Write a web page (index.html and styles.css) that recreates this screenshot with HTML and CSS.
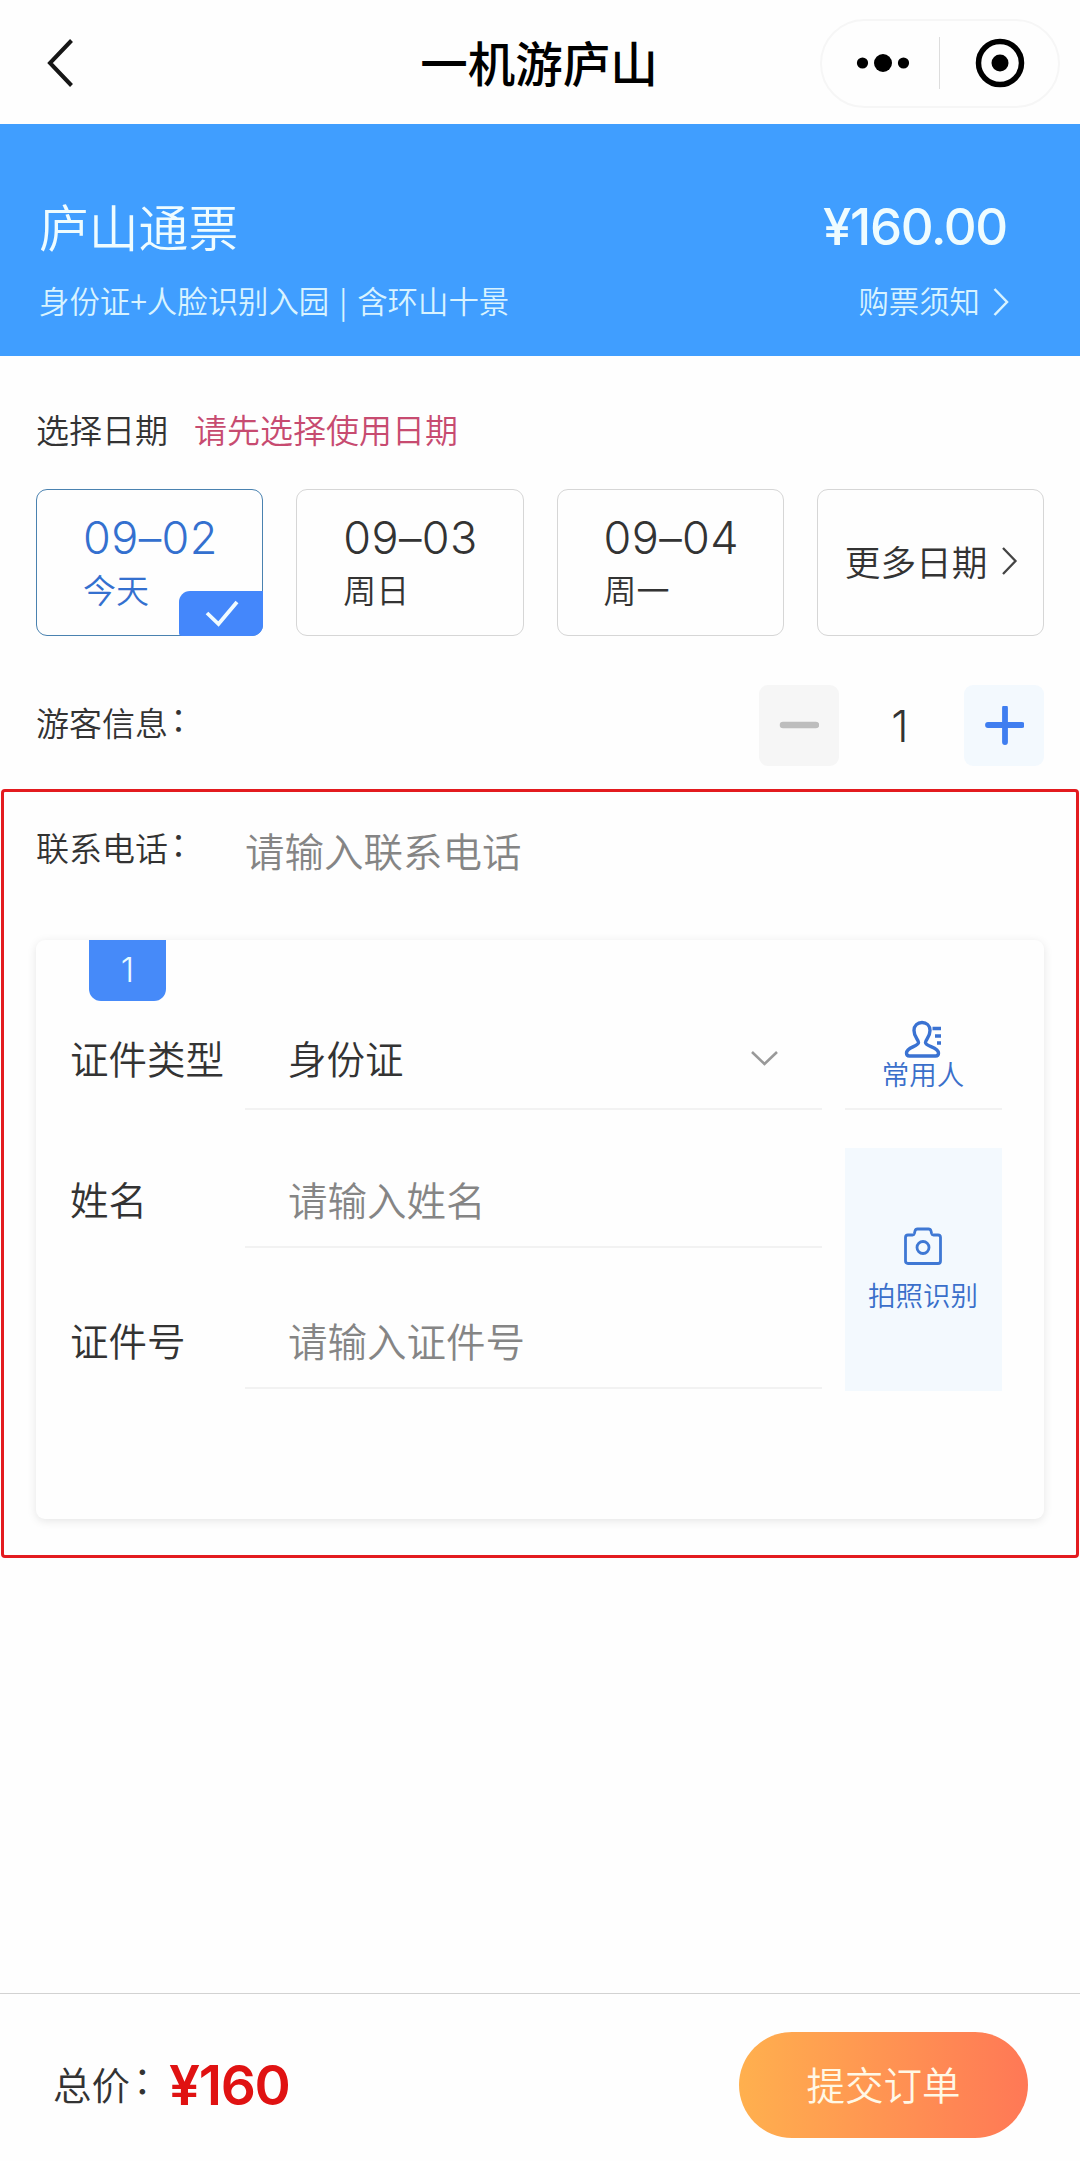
FILE: index.html
```html
<!DOCTYPE html>
<html lang="zh-CN">
<head>
<meta charset="UTF-8">
<title>一机游庐山</title>
<link rel="stylesheet" href="styles.css">
</head>
<body>
<div class="page">
  <header class="navbar">
    <svg class="back" width="28" height="50" viewBox="0 0 28 50"><path d="M25.500 2.500L4 25L25.500 47.500" fill="none" stroke="#161616" stroke-width="4"/></svg>
    <h1 class="nav-title">一机游庐山</h1>
    <div class="capsule">
      <svg class="more" width="56" height="24" viewBox="0 0 56 24"><circle cx="7.500" cy="12" r="5.600"/><circle cx="28" cy="12" r="9"/><circle cx="48.500" cy="12" r="5.600"/></svg>
      <span class="capsule-line"></span>
      <svg class="target" width="50" height="50" viewBox="0 0 50 50"><circle cx="25" cy="25" r="21.500" fill="none" stroke="#000" stroke-width="5.500"/><circle cx="25" cy="25" r="8.500"/></svg>
    </div>
  </header>

  <section class="banner">
    <div class="banner-row">
      <h2 class="ticket-name">庐山通票</h2>
      <span class="ticket-price">¥160.00</span>
    </div>
    <div class="banner-row banner-sub">
      <span class="desc">身份证+人脸识别入园 | 含环山十景</span>
      <span class="notice">购票须知<svg width="18" height="34" viewBox="0 0 18 34"><path d="M2.500 6L15 19L2.500 32" fill="none" stroke="#d8f3ff" stroke-width="2.500"/></svg></span>
    </div>
  </section>

  <section class="dates">
    <div class="date-head"><span>选择日期</span><span class="tip">请先选择使用日期</span></div>
    <div class="date-list">
      <div class="date active">
        <span class="day">09–02</span><span class="week">今天</span>
        <span class="tick"><svg width="36" height="28" viewBox="0 0 36 28"><path d="M4 13L15.500 24L34 2" fill="none" stroke="#f1fbff" stroke-width="3.800"/></svg></span>
      </div>
      <div class="date"><span class="day">09–03</span><span class="week">周日</span></div>
      <div class="date"><span class="day">09–04</span><span class="week">周一</span></div>
      <div class="date more-dates">更多日期<svg width="18" height="30" viewBox="0 0 18 30"><path d="M2 2L14.500 15L2 28" fill="none" stroke="#444" stroke-width="2.300"/></svg></div>
    </div>
  </section>

  <section class="visitors">
    <span class="visitors-label">游客信息<span class="colon">：</span></span>
    <div class="stepper">
      <span class="step minus"><svg width="40" height="40" viewBox="0 0 40 40"><path d="M4 19H37" stroke="#bdbdbd" stroke-width="6.500" stroke-linecap="round"/></svg></span>
      <span class="count">1</span>
      <span class="step plus"><svg width="40" height="40" viewBox="0 0 40 40"><path d="M4 19H38M21 2V36" stroke="#3f7ef0" stroke-width="5.800" stroke-linecap="round"/></svg></span>
    </div>
  </section>

  <section class="form">
    <div class="phone"><span class="phone-label">联系电话<span class="colon">：</span></span><span class="placeholder">请输入联系电话</span></div>
    <div class="card">
      <span class="index">1</span>
      <div class="card-body">
        <div class="fields">
          <div class="field"><span class="label">证件类型</span><div class="value">身份证<svg width="30" height="18" viewBox="0 0 30 18"><path d="M3 3L15.500 15L28 3" fill="none" stroke="#999" stroke-width="2.600"/></svg></div></div>
          <div class="field"><span class="label">姓名</span><div class="value placeholder">请输入姓名</div></div>
          <div class="field"><span class="label">证件号</span><div class="value placeholder">请输入证件号</div></div>
        </div>
        <div class="actions">
          <div class="frequent">
            <svg width="38" height="38" viewBox="0 0 38 38" fill="none" stroke="#3a72d2" stroke-width="3.400"><path d="M14.500 22.500C14.500 19.500 10 17.500 10 10.500C10 5.500 13.500 2.500 18 2.500C22.500 2.500 26 5.500 26 10.500C26 17.500 21.500 19.500 21.500 22.500C21.500 26.500 34.500 27 34.500 33C34.500 35 33.500 36 31.500 36H5.500C3.500 36 2.500 35 2.500 33C2.500 27 14.500 26.500 14.500 22.500Z"/><path d="M28.500 8.500H37M31 16H37M33 23H37"/></svg>
            <span>常用人</span>
          </div>
          <div class="photo">
            <svg width="38" height="38" viewBox="0 0 38 38" fill="none" stroke="#3f78d4" stroke-width="2.800"><path d="M4 8H8.500Q10 8 10.400 6.500L11 4Q11.500 2 13.500 2H24.500Q26.500 2 27 4L27.600 6.500Q28 8 29.500 8H34Q36.500 8 36.500 10.500V34Q36.500 36.500 34 36.500H4Q1.500 36.500 1.500 34V10.500Q1.500 8 4 8Z"/><circle cx="19" cy="20.500" r="6"/></svg>
            <span>拍照识别</span>
          </div>
        </div>
      </div>
    </div>
  </section>

  <footer class="footer">
    <div class="total"><span class="total-label">总价<span class="colon">：</span></span><span class="total-price">¥160</span></div>
    <div class="submit">提交订单</div>
  </footer>
</div>
</body>
</html>
```
FILE: styles.css
```css
* { box-sizing: border-box; }
body {
  margin: 0;
  background: #fefefe;
  color: #333;
  font-family: "Noto Sans CJK SC", sans-serif;
  font-weight: 350;
}
h1, h2 { margin: 0; }
svg { display: block; flex: none; }
.colon { margin-left: .07em; line-height: 1; vertical-align: .15em; }
.page { width: 1080px; height: 2161px; display: flex; flex-direction: column; overflow: hidden; }

.navbar {
  height: 124px;
  flex: none;
  display: grid;
  grid-template-columns: 240px 1fr 240px;
  align-items: center;
  padding: 2px 20px 0 46px;
}
.nav-title {
  text-align: center;
  padding: 0 28px 3px 0;
  font-size: 47.500px;
  line-height: 60px;
  font-weight: 500;
  color: #000;
}
.capsule {
  height: 89px;
  border: 2px solid #f6f6f6;
  border-radius: 45px;
  display: flex;
  align-items: center;
  padding: 0 32px 0 33px;
}
.capsule-line { width: 1px; height: 52px; margin: 0 35px 0 28px; background: #ddd; }

.banner {
  height: 232px;
  flex: none;
  padding: 68px 70px 0 39px;
  background: #409eff;
  color: #effcff;
}
.banner-row { display: flex; justify-content: space-between; align-items: center; height: 66px; }
.ticket-name { font-size: 49.800px; line-height: 66px; font-weight: 350; }
.ticket-price { font-family: Inter, sans-serif; font-size: 51px; font-weight: 550; letter-spacing: -1.300px; padding: 2px 3px 0 0; }
.banner-sub { height: 44px; margin-top: 20px; font-size: 30.400px; line-height: 44px; color: #d8f3ff; }
.desc { word-spacing: 3.200px; }
.notice { display: flex; align-items: center; gap: 12px; }

.dates { height: 280px; flex: none; padding: 49px 36px 0; }
.date-head { display: flex; gap: 26px; font-size: 33px; line-height: 48px; }
.tip { color: #c74b70; }
.date-list { display: grid; grid-template-columns: repeat(4, 1fr); gap: 33px; margin-top: 36px; }
.date {
  position: relative;
  height: 147px;
  border: 1px solid #d6d6d6;
  border-radius: 11px;
  padding: 23px 0 0 46px;
  display: flex;
  flex-direction: column;
}
.date.active { border-color: #4a82b0; color: #3470cf; }
.day { font-family: Inter, sans-serif; font-size: 45px; line-height: 50px; font-weight: 350; letter-spacing: .400px; }
.week { font-size: 33px; line-height: 48px; margin-top: 2px; }
.tick {
  position: absolute;
  right: -1px;
  bottom: -1px;
  width: 84px;
  height: 45px;
  border-radius: 11px 0 11px 3px;
  background: #4487fb;
  display: flex;
  align-items: center;
  justify-content: center;
}
.more-dates { flex-direction: row; align-items: center; gap: 13px; padding: 0 0 4px 27px; font-size: 35.700px; }

.visitors { height: 152px; flex: none; display: flex; justify-content: space-between; align-items: flex-start; padding: 49px 36px 0; }
.visitors-label { font-size: 33px; line-height: 74px; }
.stepper { display: flex; align-items: center; }
.step { width: 80px; height: 81px; border-radius: 9px; display: flex; align-items: center; justify-content: center; }
.minus { background: #f6f6f6; }
.plus { background: #f3f9fe; }
.count { width: 125px; padding-right: 3px; text-align: center; font-family: Inter, sans-serif; font-size: 44px; font-weight: 350; }

.form { width: 1078px; height: 769px; flex: none; margin: 1px 0 0 1px; border: 3px solid #e31b1f; border-radius: 4px; padding: 27px 32px 0; }
.phone { display: flex; align-items: center; height: 60px; }
.phone-label { width: 209px; font-size: 33px; line-height: 48px; padding-bottom: 5px; }
.placeholder { color: #858585; font-size: 39.500px; }
.card { width: 1008px; height: 579px; margin-top: 61px; border-radius: 9px; box-shadow: 0 2px 10px rgba(0, 0, 0, .1); }
.index {
  display: block;
  width: 77px;
  height: 61px;
  margin-left: 53px;
  border-radius: 0 0 12px 12px;
  background: #468af9;
  color: #e8fbff;
  font-family: Inter, sans-serif;
  font-size: 34px;
  line-height: 60px;
  font-weight: 350;
  text-align: center;
}
.card-body { display: flex; justify-content: space-between; padding: 10px 42px 0 34px; }
.fields { width: 752px; }
.field { display: flex; height: 141px; font-size: 38.500px; line-height: 56px; }
.field:first-child { height: 99px; }
.field:nth-child(2) { height: 138px; }
.label { width: 175px; align-self: flex-end; padding-bottom: 22px; }
.field:first-child .label { padding-bottom: 25px; }
.field:first-child .value { padding-bottom: 23px; }
.value {
  flex: 1;
  display: flex;
  align-items: flex-end;
  justify-content: space-between;
  border-bottom: 2px solid #f2f2f2;
  padding: 0 43px 19px 43px;
}
.value.placeholder { font-size: 39.500px; }
.value svg { margin-bottom: 18px; }
.actions { width: 157px; color: #3a6fca; font-size: 27.500px; line-height: 32px; }
.frequent { height: 99px; display: flex; flex-direction: column; align-items: center; padding: 9px 1px 0 0; border-bottom: 2px solid #f2f2f2; }
.frequent span { margin-top: -1px; }
.photo { height: 243px; margin-top: 38px; background: #f3f9fe; display: flex; flex-direction: column; align-items: center; padding: 79px 1px 0 0; }
.photo span { margin-top: 13px; }

.footer {
  height: 168px;
  flex: none;
  margin-top: auto;
  border-top: 1px solid #d2d2d2;
  display: flex;
  justify-content: space-between;
  align-items: flex-start;
  padding: 38px 52px 0 53px;
}
.total { display: flex; align-items: center; height: 106px; }
.total-label { width: 116px; padding-bottom: 4px; font-size: 38.500px; white-space: nowrap; }
.total-price { font-family: Inter, sans-serif; font-size: 55px; font-weight: 600; letter-spacing: -1.300px; color: #e01212; }
.submit {
  width: 289px;
  height: 106px;
  border-radius: 53px;
  background: linear-gradient(90deg, #ffb04e, #ff7856);
  color: #fff8e6;
  font-size: 38.500px;
  line-height: 102px;
  text-align: center;
}
```
